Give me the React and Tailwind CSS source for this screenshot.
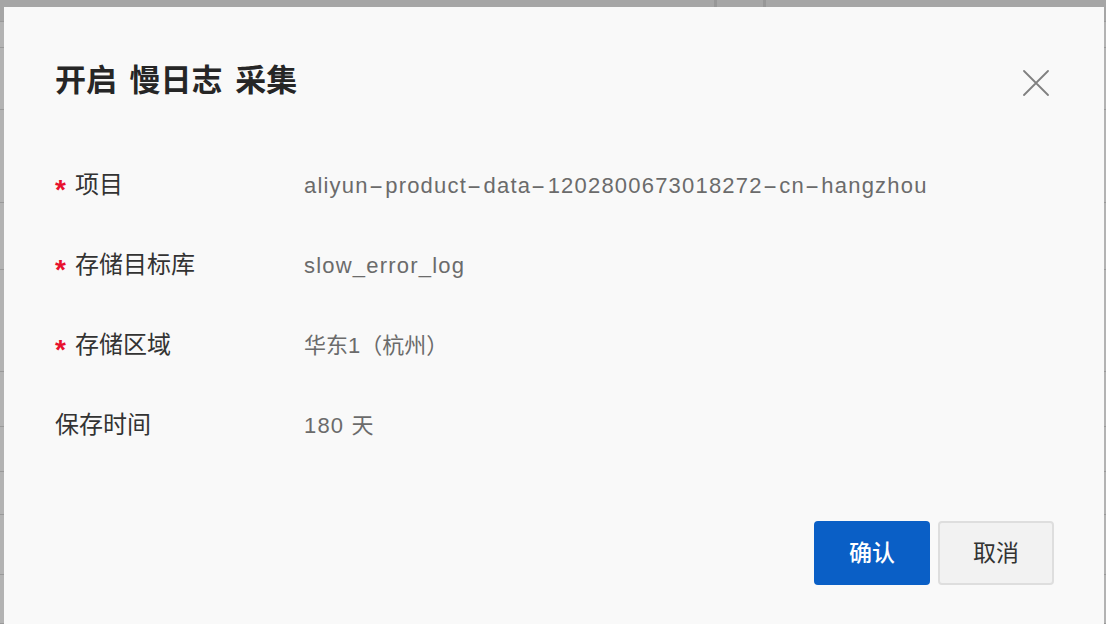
import React from 'react';

const rows = [
  { label: '项目', value: 'aliyun-product-data-1202800673018272-cn-hangzhou', required: true, latin: true },
  { label: '存储目标库', value: 'slow_error_log', required: true, latin: true },
  { label: '存储区域', value: '华东1（杭州）', required: true, latin: false },
  { label: '保存时间', value: '180 天', required: false, latin: true },
];

// background page rows peeking out on the left edge
const bgRows = [22, 26, 62, 93, 67, 102, 55, 45, 43, 60, 49];

function CloseIcon() {
  return (
    <svg width="26" height="26" viewBox="0 0 26 26" fill="none">
      <path d="M1 1L25 25M25 1L1 25" stroke="#808080" strokeWidth="1.8" strokeLinecap="round" />
    </svg>
  );
}

// hyphens render as longer dashes in the original font
function Value({ text }) {
  const parts = text.split('-');
  return parts.map((p, i) => (
    <React.Fragment key={i}>
      {p}
      {i < parts.length - 1 && <span className="inline-block scale-x-[2] mx-[4px]">-</span>}
    </React.Fragment>
  ));
}

export default function App() {
  return (
    <div className="relative w-[1106px] h-[624px] overflow-hidden bg-[#a6a6a6] font-['Liberation_Sans','Noto_Sans_CJK_SC',sans-serif]">
      {/* page behind the overlay */}
      <div className="flex flex-col w-full">
        {bgRows.map((h, i) => (
          <div key={i} style={{ height: h }} className={`flex border-b border-[#9a9a9a] ${i === 0 ? 'bg-[#a6a6a6]' : 'bg-[#b3b3b3]'}`}>
            {i === 0 && (
              <>
                <div className="w-[717px] border-r-[3px] border-[#979797]" />
                <div className="w-[49px] border-r-[3px] border-[#979797]" />
              </>
            )}
          </div>
        ))}
      </div>

      {/* dialog */}
      <div className="absolute left-[4px] top-[7px] w-[1100px] h-[640px] bg-[#f9f9f9] pl-[51px] pr-[50px] pt-[52px]">
        <div className="flex items-center justify-between h-[44px]">
          <h1 className="text-[31px] leading-[44px] font-semibold text-[#262626] [word-spacing:4px]">开启 慢日志 采集</h1>
          <button className="mr-[5px] mt-[4px]">
            <CloseIcon />
          </button>
        </div>

        <div className="mt-[42px] flex flex-col">
          {rows.map((r) => (
            <div key={r.label} className="flex items-center h-[80px]">
              <div className="w-[249px] flex items-center text-[24px] text-[#333]">
                {r.required && <span className="text-[28px] font-bold text-[#e8112d] w-[20px] translate-y-[5px]">*</span>}
                <span>{r.label}</span>
              </div>
              <div className={`text-[22px] text-[#6b6b6b] ${r.latin ? 'tracking-[1.2px]' : ''}`}>
                <Value text={r.value} />
              </div>
            </div>
          ))}
        </div>

        <div className="mt-[56px] flex justify-end gap-[8px]">
          <button className="w-[116px] h-[64px] rounded-[4px] bg-[#0a5fc6] text-white text-[23px] font-medium">确认</button>
          <button className="w-[116px] h-[64px] rounded-[4px] bg-[#f2f2f2] border-[2px] border-[#dedede] text-[#333] text-[23px]">取消</button>
        </div>
      </div>
    </div>
  );
}
